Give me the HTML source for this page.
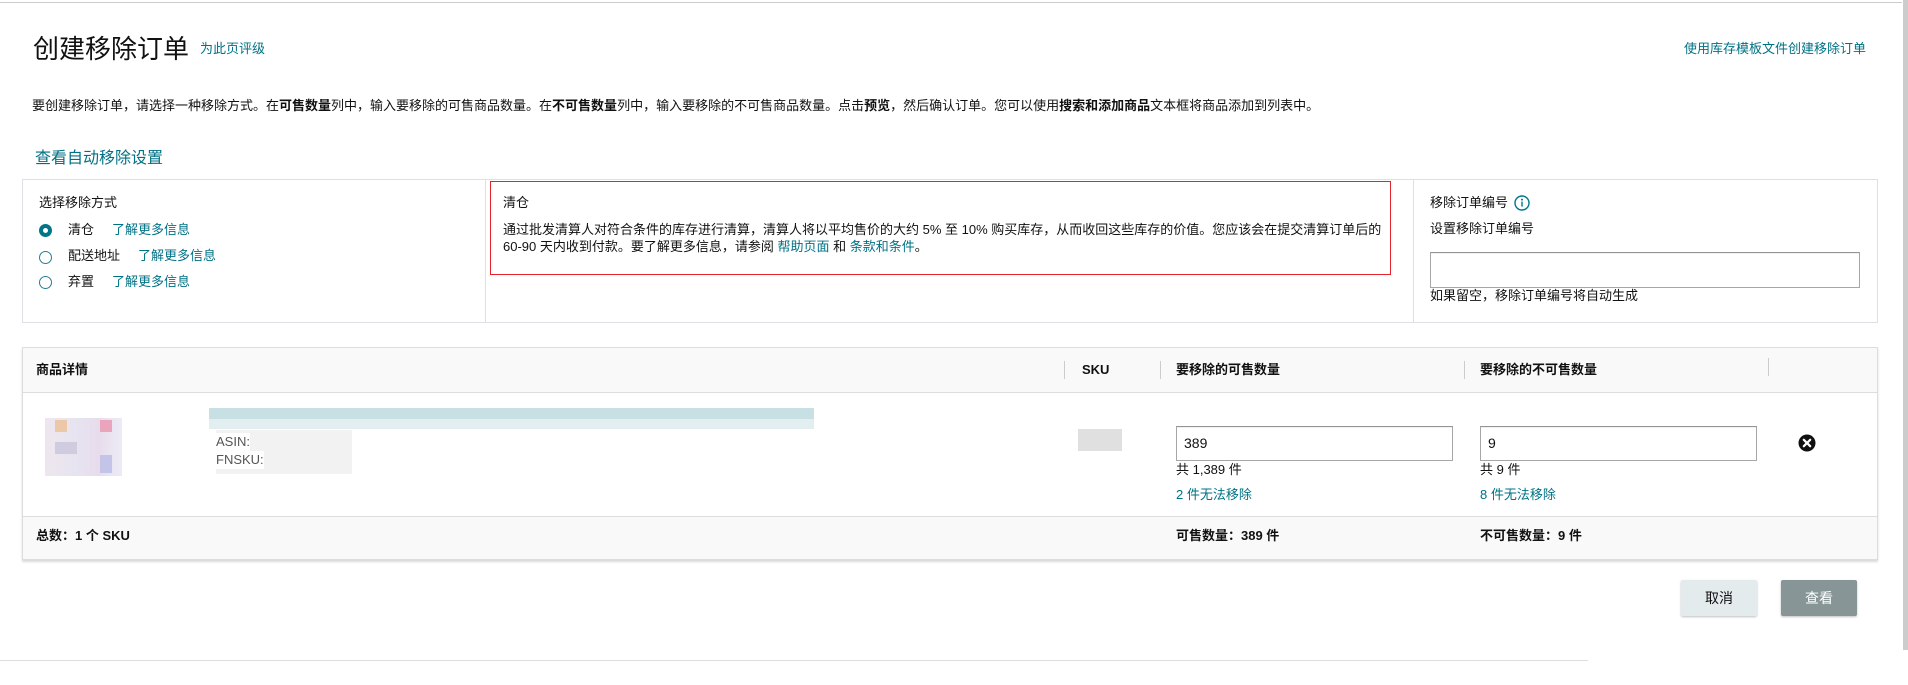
<!DOCTYPE html>
<html><head><meta charset="utf-8"><style>
*{margin:0;padding:0;box-sizing:border-box}
body{width:1908px;height:685px;background:#fff;position:relative;overflow:hidden;font-family:"Liberation Sans","Noto Sans CJK SC",sans-serif;font-size:13px;color:#111}
.a{position:absolute;white-space:nowrap;line-height:18px}
.l{color:#007185}
b{font-weight:bold}
.rad{position:absolute;width:13px;height:13px;border-radius:50%;border:1px solid #2a7e8c;background:#fff}
.rad.on{border:4px solid #00768a}
.inp{position:absolute;border:1px solid #a6a6a6;border-top-color:#949494;background:#fff;box-shadow:inset 0 1px 0 rgba(0,0,0,.05)}
.blk{position:absolute}
</style></head><body>
<div style="position:absolute;left:0;top:2px;width:1902px;height:1px;background:#ccc"></div>
<div style="position:absolute;left:1903px;top:0;width:5px;height:650px;background:#ccc"></div>
<div style="position:absolute;left:0;top:660px;width:1588px;height:1px;background:#ddd"></div>

<div class="a" style="left:33px;top:33px;font-size:26px;line-height:32px">创建移除订单</div>
<div class="a l" style="left:200px;top:40px">为此页评级</div>
<div class="a l" style="right:42px;top:40px">使用库存模板文件创建移除订单</div>
<div class="a" style="left:32px;top:97px">要创建移除订单，请选择一种移除方式。在<b>可售数量</b>列中，输入要移除的可售商品数量。在<b>不可售数量</b>列中，输入要移除的不可售商品数量。点击<b>预览</b>，然后确认订单。您可以使用<b>搜索和添加商品</b>文本框将商品添加到列表中。</div>
<div class="a l" style="left:35px;top:148px;font-size:16px;line-height:22px">查看自动移除设置</div>

<div style="position:absolute;left:22px;top:179px;width:1856px;height:144px;border:1px solid #dde0e4"></div>
<div style="position:absolute;left:485px;top:179px;width:1px;height:144px;background:#dde0e4"></div>
<div style="position:absolute;left:1413px;top:179px;width:1px;height:144px;background:#dde0e4"></div>

<div class="a" style="left:39px;top:194px">选择移除方式</div>
<div class="rad on" style="left:39px;top:224px"></div>
<div class="rad" style="left:39px;top:251px"></div>
<div class="rad" style="left:39px;top:276px"></div>
<div class="a" style="left:68px;top:221px">清仓</div><div class="a l" style="left:112px;top:221px">了解更多信息</div>
<div class="a" style="left:68px;top:247px">配送地址</div><div class="a l" style="left:138px;top:247px">了解更多信息</div>
<div class="a" style="left:68px;top:273px">弃置</div><div class="a l" style="left:112px;top:273px">了解更多信息</div>

<div style="position:absolute;left:490px;top:181px;width:901px;height:94px;border:1px solid #e3242b"></div>
<div class="a" style="left:503px;top:194px">清仓</div>
<div class="a" style="left:503px;top:221px">通过批发清算人对符合条件的库存进行清算，清算人将以平均售价的大约 5% 至 10% 购买库存，从而收回这些库存的价值。您应该会在提交清算订单后的</div>
<div class="a" style="left:503px;top:238px">60-90 天内收到付款。要了解更多信息，请参阅 <span class="l">帮助页面</span> 和 <span class="l">条款和条件</span>。</div>

<div class="a" style="left:1430px;top:194px">移除订单编号</div>
<svg style="position:absolute;left:1514px;top:195px" width="16" height="16" viewBox="0 0 16 16"><circle cx="8" cy="8" r="7" fill="none" stroke="#00768a" stroke-width="1.4"/><circle cx="8" cy="4.6" r="1" fill="#00768a"/><rect x="7.3" y="6.6" width="1.4" height="5" fill="#00768a"/></svg>
<div class="a" style="left:1430px;top:220px">设置移除订单编号</div>
<div class="inp" style="left:1430px;top:252px;width:430px;height:36px"></div>
<div class="a" style="left:1430px;top:287px">如果留空，移除订单编号将自动生成</div>

<div style="position:absolute;left:22px;top:347px;width:1856px;height:213px;border:1px solid #ddd;box-shadow:0 2px 2px rgba(0,0,0,.15)"></div>
<div style="position:absolute;left:23px;top:348px;width:1854px;height:45px;background:#f9f9f9;border-bottom:1px solid #ddd"></div>
<div style="position:absolute;left:23px;top:516px;width:1854px;height:43px;background:#f9f9f9;border-top:1px solid #ddd"></div>
<div style="position:absolute;left:1064px;top:361px;width:1px;height:18px;background:#ccc"></div>
<div style="position:absolute;left:1160px;top:361px;width:1px;height:18px;background:#ccc"></div>
<div style="position:absolute;left:1464px;top:361px;width:1px;height:18px;background:#ccc"></div>
<div style="position:absolute;left:1768px;top:358px;width:1px;height:18px;background:#ccc"></div>
<div class="a" style="left:36px;top:361px;font-weight:bold">商品详情</div>
<div class="a" style="left:1082px;top:361px;font-weight:bold">SKU</div>
<div class="a" style="left:1176px;top:361px;font-weight:bold">要移除的可售数量</div>
<div class="a" style="left:1480px;top:361px;font-weight:bold">要移除的不可售数量</div>

<div class="blk" style="left:45px;top:418px;width:77px;height:58px;background:linear-gradient(90deg,#eee6ee,#e6e4f0 40%,#e8dcec 70%,#ececf6)"></div>
<div class="blk" style="left:55px;top:420px;width:12px;height:12px;background:#ecc8a8"></div>
<div class="blk" style="left:100px;top:420px;width:12px;height:12px;background:#eaa4bc"></div>
<div class="blk" style="left:55px;top:442px;width:22px;height:12px;background:#d0cce0"></div>
<div class="blk" style="left:100px;top:455px;width:12px;height:18px;background:#c4c4e8"></div>
<div class="blk" style="left:209px;top:408px;width:605px;height:11px;background:#c8e0e4"></div>
<div class="blk" style="left:209px;top:419px;width:605px;height:10px;background:#e2eef0"></div>
<div class="blk" style="left:216px;top:430px;width:136px;height:44px;background:#f2f2f2"></div>
<div class="blk" style="left:1078px;top:429px;width:44px;height:22px;background:#e0e0e0"></div>
<div class="a" style="left:216px;top:433px;color:#555;background:#fff">ASIN:</div>
<div class="a" style="left:216px;top:451px;color:#555;background:#fff">FNSKU:</div>

<div class="inp" style="left:1176px;top:426px;width:277px;height:35px"></div>
<div class="a" style="left:1184px;top:434px;font-size:14px">389</div>
<div class="inp" style="left:1480px;top:426px;width:277px;height:35px"></div>
<div class="a" style="left:1488px;top:434px;font-size:14px">9</div>
<div class="a" style="left:1176px;top:461px">共 1,389 件</div>
<div class="a l" style="left:1176px;top:486px">2 件无法移除</div>
<div class="a" style="left:1480px;top:461px">共 9 件</div>
<div class="a l" style="left:1480px;top:486px">8 件无法移除</div>
<svg style="position:absolute;left:1798px;top:434px" width="18" height="18" viewBox="0 0 18 18"><circle cx="9" cy="9" r="8.5" fill="#111"/><path d="M5.8 5.8L12.2 12.2M12.2 5.8L5.8 12.2" stroke="#fff" stroke-width="2.2" stroke-linecap="round"/></svg>

<div class="a" style="left:36px;top:527px;font-weight:bold">总数：1 个 SKU</div>
<div class="a" style="left:1176px;top:527px;font-weight:bold">可售数量：389 件</div>
<div class="a" style="left:1480px;top:527px;font-weight:bold">不可售数量：9 件</div>

<div style="position:absolute;left:1681px;top:580px;width:76px;height:36px;background:#e3ebec;border-radius:2px;box-shadow:0 1px 2px rgba(0,0,0,.25);text-align:center;line-height:36px;font-size:14px">取消</div>
<div style="position:absolute;left:1781px;top:580px;width:76px;height:36px;background:#879596;border-radius:2px;box-shadow:0 1px 2px rgba(0,0,0,.25);text-align:center;line-height:36px;font-size:14px;color:#fff">查看</div>
</body></html>
